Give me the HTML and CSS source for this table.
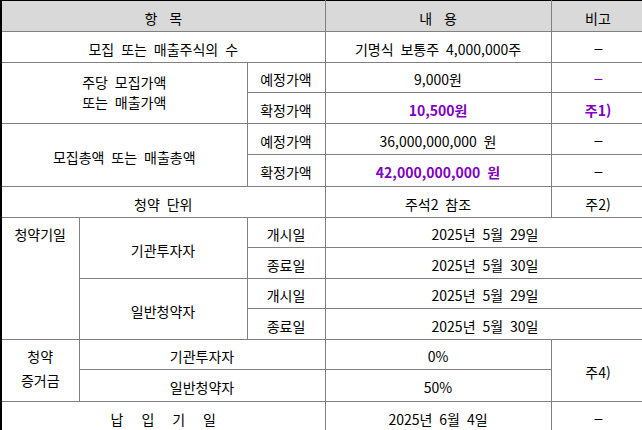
FILE: index.html
```html
<!DOCTYPE html>
<html lang="ko">
<head>
<meta charset="utf-8">
<title>공모개요</title>
<link rel="stylesheet" href="styles.css">
</head>
<body>
<div class="frame">
<table class="grid">
  <colgroup>
    <col class="c1"><col class="c2"><col class="c3"><col class="c4"><col class="c5">
  </colgroup>
  <thead>
    <tr class="h31">
      <th colspan="3" class="wide">항 목</th>
      <th class="wide">내 용</th>
      <th>비고</th>
    </tr>
  </thead>
  <tbody>
    <tr class="h31">
      <td colspan="3">모집 또는 매출주식의 수</td>
      <td>기명식 보통주 4,000,000주</td>
      <td><span class="dash">-</span></td>
    </tr>
    <tr class="h30">
      <td colspan="2" rowspan="2" class="two">주당 모집가액<br>또는 매출가액</td>
      <td>예정가액</td>
      <td>9,000원</td>
      <td class="violet"><span class="dash">-</span></td>
    </tr>
    <tr class="h31">
      <td>확정가액</td>
      <td class="violet strong">10,500원</td>
      <td class="violet strong">주1)</td>
    </tr>
    <tr class="h31">
      <td colspan="2" rowspan="2">모집총액 또는 매출총액</td>
      <td>예정가액</td>
      <td>36,000,000,000 원</td>
      <td><span class="dash">-</span></td>
    </tr>
    <tr class="h32">
      <td>확정가액</td>
      <td class="violet strong">42,000,000,000 원</td>
      <td><span class="dash">-</span></td>
    </tr>
    <tr class="h31">
      <td colspan="3">청약 단위</td>
      <td>주석2 참조</td>
      <td>주2)</td>
    </tr>
    <tr class="h30">
      <td rowspan="4" class="top">청약기일</td>
      <td rowspan="2">기관투자자</td>
      <td>개시일</td>
      <td colspan="2">2025년 5월 29일</td>
    </tr>
    <tr class="h31">
      <td>종료일</td>
      <td colspan="2">2025년 5월 30일</td>
    </tr>
    <tr class="h30">
      <td rowspan="2">일반청약자</td>
      <td>개시일</td>
      <td colspan="2">2025년 5월 29일</td>
    </tr>
    <tr class="h31">
      <td>종료일</td>
      <td colspan="2">2025년 5월 30일</td>
    </tr>
    <tr class="h30">
      <td rowspan="2" class="two tall">청약<br>증거금</td>
      <td colspan="2">기관투자자</td>
      <td>0%</td>
      <td rowspan="2">주4)</td>
    </tr>
    <tr class="h32">
      <td colspan="2">일반청약자</td>
      <td>50%</td>
    </tr>
    <tr class="h31">
      <td colspan="3" class="spread">납 입 기 일</td>
      <td>2025년 6월 4일</td>
      <td><span class="dash">-</span></td>
    </tr>
  </tbody>
</table>
</div>
</body>
</html>
```

FILE: styles.css
```css
html, body {
  margin: 0;
  padding: 0;
  background: #ffffff;
}

.frame {
  width: 642px;
  height: 430px;
  overflow: hidden;
}

.grid {
  width: 644px;
  table-layout: fixed;
  border-collapse: collapse;
  font-family: "Noto Sans CJK KR", "Noto Sans", sans-serif;
  font-size: 14px;
  color: #000;
  word-spacing: 3px;
  border-top: 1px solid #000;
  border-left: 2px solid #000;
}

.c1 { width: 78px; }
.c2 { width: 168px; }
.c3 { width: 78px; }
.c4 { width: 226px; }
.c5 { width: 94px; }

.grid th,
.grid td {
  border: 1px solid #808080;
  padding: 3px 0 0 0;
  text-align: center;
  vertical-align: middle;
  line-height: 20px;
  font-weight: normal;
  white-space: nowrap;
}

.grid th {
  background: #d9d9d9;
}

.grid thead th {
  border-top: 1px solid #000;
}

.h30 { height: 30px; }
.h31 { height: 31px; }
.h32 { height: 32px; }

.grid .wide { word-spacing: 8px; }
.grid .spread { word-spacing: 14px; }

.grid td.two { line-height: 20px; padding: 0 0 3px 0; }
.grid td.tall { line-height: 24px; padding: 0 0 5px 0; }

.grid td.top {
  vertical-align: top;
  padding-top: 6px;
}

.dash {
  display: inline-block;
  transform: scaleX(2.2);
}

.grid .violet { color: #7d00c4; }
.grid .strong { font-weight: bold; }
```
